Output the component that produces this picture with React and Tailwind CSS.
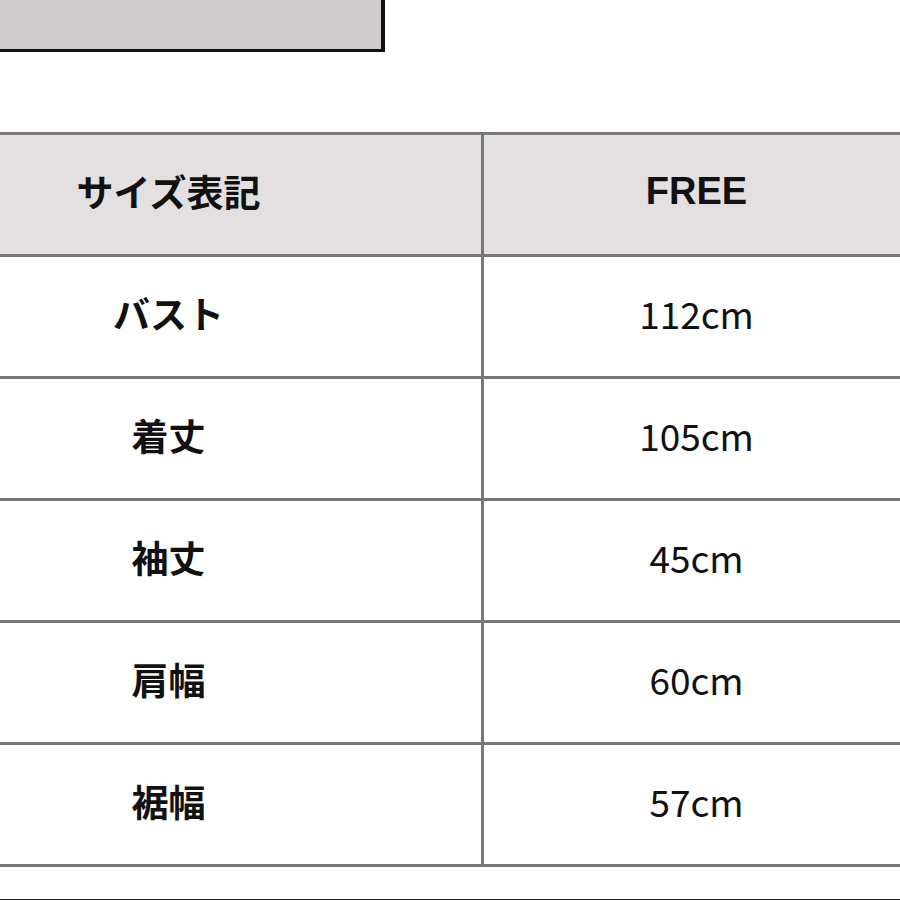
const rows = [
  ['バスト', '112cm'],
  ['着丈', '105cm'],
  ['袖丈', '45cm'],
  ['肩幅', '60cm'],
  ['裾幅', '57cm'],
];

const font = { fontFamily: '"Noto Sans CJK JP", "Noto Sans", sans-serif' };

export default function App() {
  return (
    <div className="w-[900px] h-[900px] bg-white text-[#111] overflow-hidden flex flex-col" style={font}>
      <div className="w-[385px] h-[52px] bg-[#cfcbcc] border-r-[4px] border-b-[3px] border-[#111]" />

      <div className="mt-[80px] border-t-[3px] border-[#777]">
        <Row label="サイズ表記" value="FREE" header />
        {rows.map(([label, value]) => (
          <Row key={label} label={label} value={value} />
        ))}
      </div>

      <div className="flex-1" />
      <div className="h-px bg-[#222]" />
    </div>
  );
}

function Row({ label, value, header }) {
  return (
    <div className={`flex h-[122px] border-b-[3px] border-[#777] ${header ? 'bg-[#e4e0e1]' : ''}`}>
      <div className="w-[484px] pr-[144px] pb-[7px] border-r-[3px] border-[#777] flex items-center justify-center">
        <span className="text-[37px] font-bold leading-none">{label}</span>
      </div>
      <div className="flex-1 pl-[9px] pb-[7px] flex items-center justify-center">
        {header ? (
          <span className="text-[38px] font-bold leading-none font-['Liberation_Sans',Arial,sans-serif]">{value}</span>
        ) : (
          <span className="text-[37px] font-normal leading-none">{value}</span>
        )}
      </div>
    </div>
  );
}
